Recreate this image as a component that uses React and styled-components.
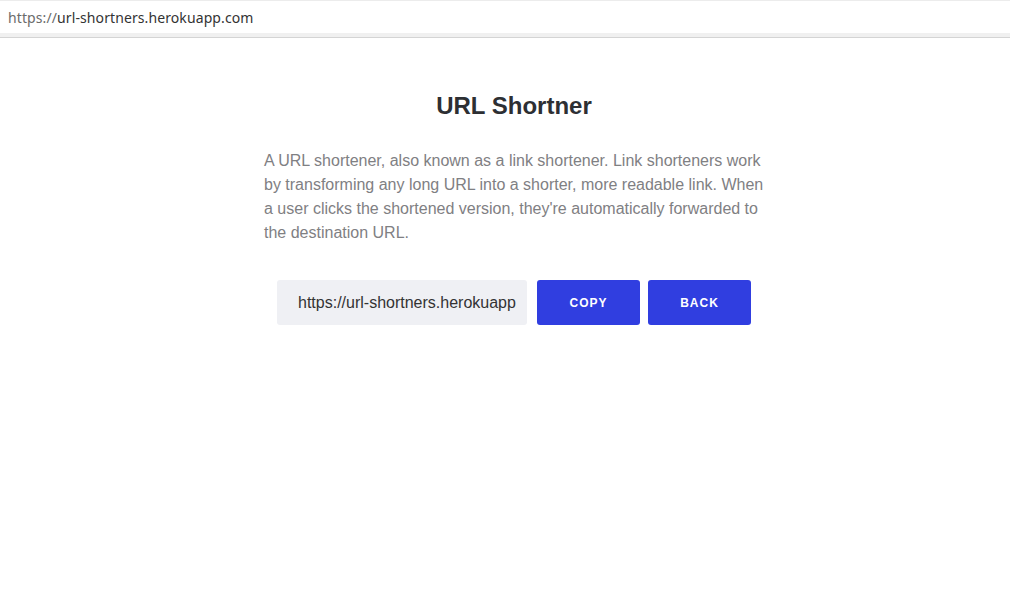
import * as React from "react"
import styled, { createGlobalStyle } from "styled-components"

const GlobalStyle = createGlobalStyle`
  html, body {
    margin: 0;
    padding: 0;
    background: #fff;
  }
  body {
    font-family: "Liberation Sans", Arial, sans-serif;
  }
`

const AddressBar = styled.div`
  height: 32px;
  border-top: 1px solid #ececec;
  border-bottom: 4px solid #f0f0f0;
  box-shadow: 0 1px 0 #d4d4d4;
  display: flex;
  align-items: center;
  padding-left: 8px;
  font-family: "Noto Sans", sans-serif;
  font-size: 14px;
  letter-spacing: 0.1px;
  color: #333;

  .scheme {
    color: #6b6b6b;
  }
`

const Main = styled.main`
  padding: 53px 0 0 18px;
  display: flex;
  flex-direction: column;
  align-items: center;
`

const Title = styled.h1`
  margin: 0;
  font-size: 24px;
  line-height: 32px;
  font-weight: 700;
  color: #2d2f33;
`

const Description = styled.p`
  width: 500px;
  margin: 27px 0 0;
  font-size: 16px;
  line-height: 24px;
  color: #7f8083;
`

const Actions = styled.div`
  display: flex;
  gap: 10px;
  margin-top: 35px;
`

const UrlField = styled.input`
  width: 250px;
  height: 45px;
  box-sizing: border-box;
  border: none;
  border-radius: 3px;
  background: #eff0f4;
  padding: 0 10px 0 21px;
  font-family: "Liberation Sans", Arial, sans-serif;
  font-size: 16px;
  color: #333;
  outline: none;
`

const Button = styled.button`
  width: 103px;
  height: 45px;
  border: none;
  border-radius: 3px;
  background: #303ee0;
  color: #fff;
  font-family: "Liberation Sans", Arial, sans-serif;
  font-weight: 700;
  font-size: 12px;
  letter-spacing: 1px;
  text-transform: uppercase;
  cursor: pointer;
  margin-left: ${({ $tight }) => ($tight ? "-2px" : "0")};
`

export default function App() {
  return (
    <>
      <GlobalStyle />
      <AddressBar>
        <span className="scheme">https://</span>url-shortners.herokuapp.com
      </AddressBar>
      <Main>
        <Title>URL Shortner</Title>
        <Description>
          A URL shortener, also known as a link shortener. Link shorteners work
          by transforming any long URL into a shorter, more readable link. When
          a user clicks the shortened version, they're automatically forwarded
          to the destination URL.
        </Description>
        <Actions>
          <UrlField readOnly value="https://url-shortners.herokuapp.com/abc123" />
          <Button>Copy</Button>
          <Button $tight>Back</Button>
        </Actions>
      </Main>
    </>
  )
}
